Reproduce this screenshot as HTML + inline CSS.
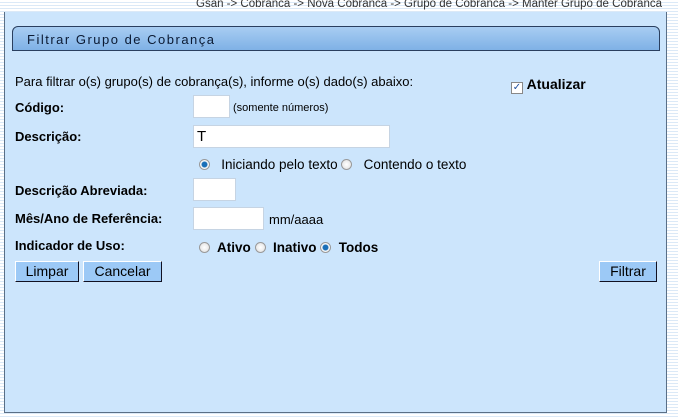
<!DOCTYPE html>
<html><head><meta charset="utf-8"><style>
*{margin:0;padding:0;box-sizing:border-box}
body{width:678px;height:419px;overflow:hidden;position:relative;font-family:"Liberation Sans",sans-serif;font-size:13px;color:#000;
background:repeating-linear-gradient(to bottom,#fff 0,#fff 2px,#dbe9f7 2px,#dbe9f7 3px)}
.a{position:absolute;white-space:nowrap}
.panel{position:absolute;left:4px;top:12px;width:663px;height:401px;background:#cce5fc;border:1px solid #5a6f86;border-top:none}
.title{position:absolute;left:12px;top:26px;width:648px;height:25px;border:1px solid #2a3f5f;border-radius:6px 6px 0 0;
background:linear-gradient(#a8cdf2,#7fb1e6);font-size:13px;letter-spacing:1.5px;padding:5px 0 0 14px;color:#0b1a33}
.b{font-weight:bold}
.in{position:absolute;background:#fff;border:1px solid #c6d4e3;height:23px}
.btn{position:absolute;height:21px;background:#9cc9f6;border:1px solid;border-color:#fff #112 #112 #fff;font-size:14px;text-align:center;line-height:19px}
.r{display:inline-block;width:11px;height:11px;border-radius:50%;border:1px solid #999;background:radial-gradient(#fff,#ddd);vertical-align:-1px}
.r.on{background:radial-gradient(#1a6fb8 0,#1a6fb8 2.5px,#fff 3.5px,#ddd)}
</style></head><body>
<div class="a" style="right:16px;top:-2px;font-size:11.5px;color:#333">Gsan -&gt; Cobranca -&gt; Nova Cobranca -&gt; Grupo de Cobranca -&gt; Manter Grupo de Cobranca</div>
<div class="panel"></div>
<div class="title">Filtrar Grupo de Cobrança</div>
<div class="a" style="left:15px;top:74px;font-size:13px">Para filtrar o(s) grupo(s) de cobrança(s), informe o(s) dado(s) abaixo:</div>
<div class="a" style="left:511px;top:76px"><span style="display:inline-block;width:12px;height:12px;border:1px solid #888;background:#fff;font-size:10px;line-height:10px;text-align:center;color:#2050a0;vertical-align:-1px">✓</span> <b style="font-size:14px">Atualizar</b></div>
<div class="a b" style="left:15px;top:100px">Código:</div>
<div class="in" style="left:193px;top:95px;width:37px"></div>
<div class="a" style="left:233px;top:102px;font-size:11px">(somente números)</div>
<div class="a b" style="left:15px;top:129px">Descrição:</div>
<div class="in" style="left:193px;top:125px;width:197px;font-size:15px;padding:2px 0 0 3px">T</div>
<div class="a" style="left:199px;top:157px;font-size:13.5px"><span class="r on"></span>&nbsp;&nbsp; Iniciando pelo texto <span class="r"></span>&nbsp;&nbsp; Contendo o texto</div>
<div class="a b" style="left:15px;top:183px">Descrição Abreviada:</div>
<div class="in" style="left:193px;top:178px;width:43px"></div>
<div class="a b" style="left:15px;top:211px">Mês/Ano de Referência:</div>
<div class="in" style="left:193px;top:207px;width:71px"></div>
<div class="a" style="left:269px;top:212px">mm/aaaa</div>
<div class="a b" style="left:15px;top:238px">Indicador de Uso:</div>
<div class="a b" style="left:199px;top:240px;font-size:13.5px"><span class="r"></span>&nbsp; Ativo <span class="r"></span>&nbsp; Inativo <span class="r on"></span>&nbsp; Todos</div>
<div class="btn" style="left:15px;top:261px;width:64px">Limpar</div>
<div class="btn" style="left:83px;top:261px;width:79px">Cancelar</div>
<div class="btn" style="left:599px;top:261px;width:58px">Filtrar</div>
</body></html>
